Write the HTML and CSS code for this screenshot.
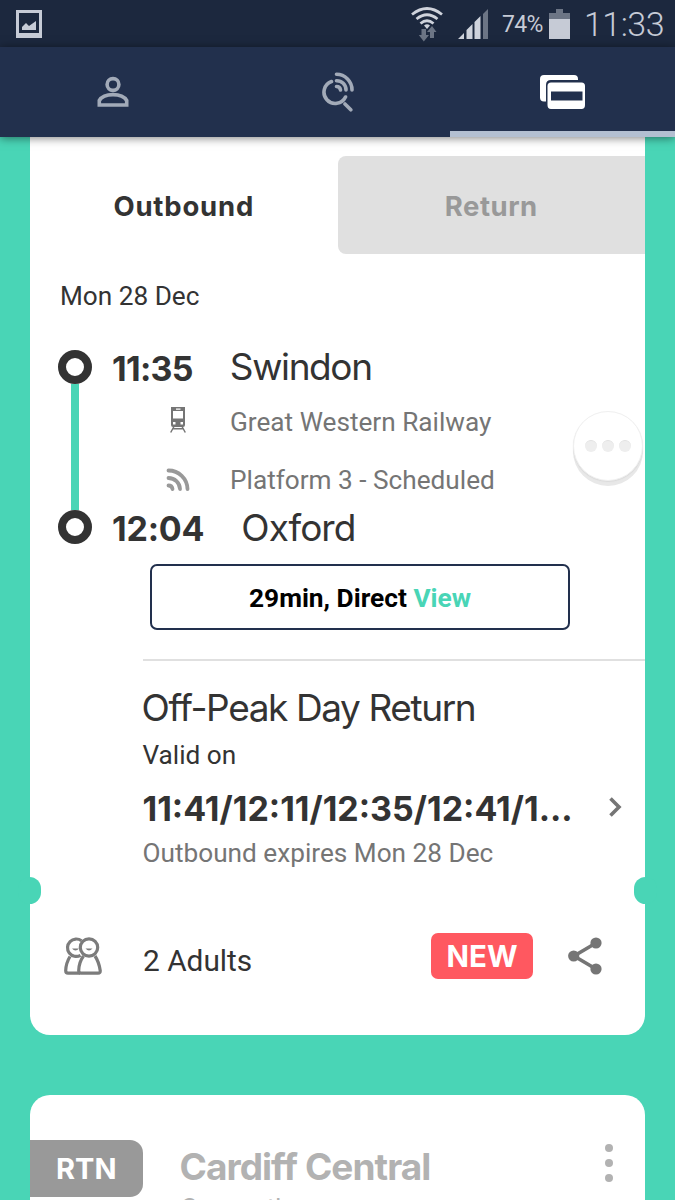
FILE: index.html
```html
<!DOCTYPE html>
<html lang="en">
  <head>
    <meta charset="UTF-8" />
    <meta name="viewport" content="width=device-width, initial-scale=1.0" />
    <title>My Tickets</title>
    <link rel="stylesheet" href="styles.css">
  </head>
  <body>
    <!-- phone status bar -->
    <div class="status-bar">
      <svg class="icon-picture" width="26" height="28" viewBox="0 0 26 28">
        <path fill="#c6cbd6" fill-rule="evenodd" d="M0 0h26v28H0zM3 3v20h20V3z" />
        <path fill="#c6cbd6" d="M6 20v-3l4-4 3 3 7-5v9z" />
      </svg>
      <div class="status-right">
        <svg class="icon-wifi" width="32" height="36" viewBox="0 0 32 36">
          <g fill="none" stroke="#cfd3dc" stroke-width="2.8">
            <path d="M1 8.500Q16-3.500 31 8.500" />
            <path d="M5.500 13Q16 4.500 26.500 13" />
            <path d="M9.500 17.500Q16 12 22.500 17.500" />
          </g>
          <path fill="#cfd3dc" d="M13 19.500q3-2.500 6 0L16 23z" />
          <path fill="#6c7585" d="M10.500 23h4.500v6h3l-5.200 6.500L7.800 29h2.700zM19 32v-6h-3l5-6 4.500 6H23v6z" />
        </svg>
        <svg class="icon-signal" width="30" height="30" viewBox="0 0 30 30">
          <path fill="#cfd3dc" d="M0 30l6-6v6zM8.500 30v-9l6-6v15zM16.500 30V13l6-6v23z" />
          <path fill="#6c7585" d="M25 30V5l5-5v30z" />
        </svg>
        <span class="battery-text">74%</span>
        <svg class="icon-battery" width="21" height="30" viewBox="0 0 21 30">
          <path fill="#6c7585" d="M0 4h7V0h7v4h7v7H0z" />
          <path fill="#c6cbd6" d="M0 10h21v20H0z" />
        </svg>
        <span class="clock">11:33</span>
      </div>
    </div>

    <!-- main tabs -->
    <nav class="nav">
      <a class="nav-item">
        <svg width="32" height="32" viewBox="0 0 32 32" fill="none" stroke="#a2aab8" stroke-width="3.600">
          <circle cx="16" cy="8.500" r="5.900" />
          <path d="M2.300 29V24.500C5 20 11 18.600 16 18.600S27 20 29.700 24.500V29z" />
        </svg>
      </a>
      <a class="nav-item">
        <svg width="34" height="40" viewBox="0 0 34 40" fill="none" stroke="#a2aab8" stroke-width="3.600" stroke-linecap="round">
          <path d="M10.500 9.500A11.300 11.300 0 1 0 24.500 25" />
          <path d="M24 32l5.800 5.800" />
          <path d="M15.500 2.300A15.500 15.500 0 0 1 31 18" />
          <path d="M15.500 8.700A9.200 9.200 0 0 1 25 18" />
          <path d="M15.500 14.500Q19 14.500 19.500 18" />
        </svg>
      </a>
      <a class="nav-item active">
        <svg width="46" height="36" viewBox="0 0 46 36">
          <path fill="#fff" d="M4 1h30q4 0 4 4v1H11q-5 0-5 5v16.500H4q-4 0-4-4V5q0-4 4-4z" />
          <path fill="#fff" fill-rule="evenodd" d="M11 8.500h30.500q3.500 0 3.500 3.500v19q0 4-3.500 4H11q-3.500 0-3.500-4V12q0-3.500 3.500-3.500zM11 17.500v9h31.500v-9z" />
        </svg>
      </a>
    </nav>

    <main class="tickets">
      <section class="card">
        <div class="tabs">
          <div class="tab">Outbound</div>
          <div class="tab inactive">Return</div>
        </div>

        <div class="date">Mon 28 Dec</div>

        <div class="journey">
          <div class="rail">
            <span class="stop"></span>
            <span class="line"></span>
            <span class="stop"></span>
          </div>
          <div class="legs">
            <div class="place"><span class="time">11:35</span><span class="station">Swindon</span></div>
            <div class="info operator">
              <span class="info-icon">
                <svg width="16" height="26" viewBox="0 0 16 26">
                  <path fill="#757575" fill-rule="evenodd" d="M1 0h14v18q0 2-2 2H3q-2 0-2-2zM3 4v7.500h10V4zM6 1.500v1.200h4.500V1.500zM3 15v2.500h2.500V15zM10.500 15v2.500H13V15z" />
                  <path stroke="#757575" stroke-width="1.500" fill="none" d="M4 19.500L.7 25.500M12 19.500l3.300 6M3 21.700h10" />
                </svg>
              </span>
              <span>Great Western Railway</span>
            </div>
            <div class="info platform">
              <span class="info-icon">
                <svg width="24" height="24" viewBox="0 0 24 24" fill="none" stroke="#999" stroke-width="3.800" stroke-linecap="round">
                  <path d="M2.500 2.500A19 19 0 0 1 21.500 21" />
                  <path d="M2.500 10A11.500 11.500 0 0 1 14 21" />
                  <path d="M2.500 17.500Q6 17.500 6.500 21" />
                </svg>
              </span>
              <span>Platform 3 - Scheduled</span>
            </div>
            <div class="place last"><span class="time">12:04</span><span class="station">Oxford</span></div>
          </div>
        </div>

        <div class="bubble"><i></i><i></i><i></i></div>

        <button class="view-btn">29min, Direct <span>View</span></button>

        <div class="fare">
          <h2 class="fare-title">Off-Peak Day Return</h2>
          <p class="fare-label">Valid on</p>
          <div class="fare-times">
            <span class="times">11:41/12:11/12:35/12:41/1...</span>
            <svg width="14" height="22" viewBox="0 0 14 22" fill="none" stroke="#757575" stroke-width="3.600">
              <path d="M2.500 2.500l8.500 8.500-8.500 8.500" />
            </svg>
          </div>
          <p class="fare-expiry">Outbound expires Mon 28 Dec</p>
        </div>

        <span class="notch left"></span>
        <span class="notch right"></span>

        <div class="card-footer">
          <svg class="icon-people" width="38" height="38" viewBox="0 0 38 38" fill="none" stroke="#7c7c7c" stroke-width="3.200">
            <path d="M6 19.500Q2 26 1.700 33.500Q1.700 36.200 4 36.200H16M16.500 18.300a8.700 8.700 0 1 1 1-14.500" />
            <circle cx="25" cy="10.500" r="8.700" />
            <path d="M19.500 19Q15 25 14.700 33.500Q14.700 36.200 17 36.200H34Q36.500 36.200 36.200 33.500Q35 25 31 19" />
            <path fill="#7c7c7c" stroke="none" d="M8 11.500h7q-3.500 4-7 0zM21.500 11.500h7q-3.500 4-7 0z" />
          </svg>
          <span class="passengers">2 Adults</span>
          <span class="badge">NEW</span>
          <svg class="icon-share" width="34" height="38" viewBox="0 0 34 38">
            <path stroke="#757575" stroke-width="3.600" fill="none" d="M28 6L6 19l22 13" />
            <g fill="#757575">
              <circle cx="28" cy="6" r="5.600" />
              <circle cx="5.700" cy="19" r="5.600" />
              <circle cx="28" cy="32" r="5.600" />
            </g>
          </svg>
        </div>
      </section>

      <section class="card next">
        <div class="next-row">
          <span class="rtn">RTN</span>
          <div class="next-text">
            <span class="next-title">Cardiff Central</span>
            <span class="next-sub">Carmarthen</span>
          </div>
          <div class="dots"><i></i><i></i><i></i></div>
        </div>
      </section>
    </main>
  </body>
</html>
```
FILE: styles.css
```css
* {
  box-sizing: border-box;
}

body {
  margin: 0;
  height: 1200px;
  overflow: hidden;
  display: flex;
  flex-direction: column;
  background: #49d5b6;
  color: #333;
  font-family: Roboto, sans-serif;
  font-size: 26.2px;
}

svg {
  display: block;
  flex: none;
}

h2,
p {
  margin: 0;
  font-weight: 400;
}

.status-bar {
  flex: none;
  height: 47px;
  padding: 0 11px 0 16px;
  display: flex;
  justify-content: space-between;
  align-items: center;
  background: #1c283e;
  color: #c6cbd6;
}

.status-right {
  display: flex;
  align-items: center;
}

.icon-wifi {
  margin-right: 15px;
}

.icon-signal {
  margin-right: 14px;
}

.battery-text {
  width: 42px;
  margin-right: 5px;
  padding-top: 2px;
  font-size: 23px;
  letter-spacing: -0.7px;
}

.icon-battery {
  margin-right: 14px;
}

.clock {
  width: 80px;
  font-size: 34px;
  font-weight: 350;
  letter-spacing: -0.5px;
}

.nav {
  flex: none;
  height: 90px;
  display: flex;
  background: #22304d;
  box-shadow: 0 1px 9px rgba(0, 0, 0, 0.5);
  position: relative;
  z-index: 2;
}

.nav-item {
  flex: 1;
  display: flex;
  align-items: center;
  justify-content: center;
  border-bottom: 6px solid transparent;
  padding-top: 6px;
}

.nav-item.active {
  border-color: #b3bfd1;
}

.tickets {
  padding: 0 30px;
}

.card {
  position: relative;
  height: 898px;
  background: #fff;
  border-radius: 0 0 20px 20px;
}

.tabs {
  display: flex;
  padding-top: 19px;
}

.tab {
  flex: 1;
  height: 98px;
  line-height: 101px;
  text-align: center;
  font-family: Inter, sans-serif;
  font-size: 27.5px;
  font-weight: 700;
  letter-spacing: 0.8px;
}

.tab.inactive {
  background: #e0e0e0;
  color: #999;
  border-radius: 8px 0 0 8px;
  letter-spacing: 0.5px;
}

.date {
  margin: 26px 0 0 30px;
  height: 70px;
  line-height: 32px;
}

.journey {
  display: flex;
  height: 204px;
  padding-left: 28px;
}

.rail {
  width: 34px;
  height: 194px;
  margin-right: 20px;
  display: flex;
  flex-direction: column;
  align-items: center;
}

.stop {
  width: 34px;
  height: 34px;
  border: 8px solid #333;
  border-radius: 50%;
}

.line {
  flex: 1;
  width: 8px;
  background: #49d5b6;
}

.place {
  display: flex;
  align-items: center;
  height: 34px;
  font-family: Inter, sans-serif;
}

.place.last {
  height: 54px;
}

.time {
  margin-right: 37px;
  padding-top: 2px;
  font-size: 34px;
  font-weight: 700;
  letter-spacing: -0.7px;
}

.last .time {
  letter-spacing: -0.2px;
}

.station {
  margin-bottom: 2px;
  font-size: 37px;
  letter-spacing: -1.4px;
}

.last .station {
  margin-bottom: 0;
  letter-spacing: -1px;
}

.info {
  display: flex;
  align-items: center;
  color: #757575;
}

.operator {
  height: 76px;
}

.operator svg {
  margin-bottom: 4px;
}

.platform {
  height: 40px;
}

.info-icon {
  width: 118px;
  padding-left: 14px;
  display: flex;
  justify-content: center;
}

/* floating assistant button */
.bubble {
  position: absolute;
  top: 274px;
  right: 2px;
  width: 70px;
  height: 70px;
  display: flex;
  align-items: center;
  justify-content: center;
  gap: 5px;
  background: #fff;
  border: 1px solid #f0f0f0;
  border-radius: 50%;
  box-shadow: 0 1px 1px #dadada, 0 5px 0 #e8e8e8;
}

.bubble i {
  width: 12px;
  height: 12px;
  border-radius: 50%;
  background: #eee;
  border-top: 1px solid #e0e0e0;
}

.view-btn {
  display: block;
  width: 420px;
  height: 66px;
  margin: 10px 0 0 120px;
  padding: 2px 0 0;
  background: #fff;
  border: 2px solid #22304d;
  border-radius: 7px;
  color: #000;
  font: 700 26.3px Roboto, sans-serif;
}

.view-btn span {
  color: #49d5b6;
}

.fare {
  margin: 29px 0 0 112.500px;
  padding-top: 20px;
  height: 258px;
  border-top: 2px solid #e0e0e0;
}

.fare-title {
  height: 54px;
  line-height: 54px;
  margin-left: -1px;
  font-family: Inter, sans-serif;
  font-size: 37px;
  letter-spacing: -1.4px;
}

.fare-label {
  height: 40px;
  line-height: 40px;
}

.fare-times {
  display: flex;
  align-items: center;
  justify-content: space-between;
  height: 62px;
  padding: 2px 23px 0 0;
  font-family: Inter, sans-serif;
  font-size: 34px;
  font-weight: 700;
}

.times {
  padding-top: 2px;
}

.fare-expiry {
  line-height: 33px;
  color: #757575;
}

.notch {
  position: absolute;
  top: 740px;
  width: 23px;
  height: 27px;
  border-radius: 12px;
  background: #49d5b6;
}

.notch.left {
  left: -12px;
}

.notch.right {
  right: -12px;
}

.card-footer {
  display: flex;
  align-items: center;
  height: 78px;
  padding: 0 43px 0 34px;
}

.passengers {
  margin-left: 41px;
  padding-top: 9px;
  font-size: 29.8px;
}

.badge {
  width: 102px;
  height: 46px;
  margin-left: auto;
  margin-right: 35px;
  border-radius: 7px;
  background: #ff5860;
  color: #fff;
  line-height: 47px;
  text-align: center;
  font-family: Inter, sans-serif;
  font-size: 29.5px;
  font-weight: 700;
}

.card.next {
  margin-top: 60px;
  height: 105px;
  padding-top: 45px;
  border-radius: 20px 20px 0 0;
  overflow: hidden;
}

.next-row {
  display: flex;
  color: #b2b2b2;
  font-family: Inter, sans-serif;
}

.rtn {
  width: 112.500px;
  height: 57px;
  line-height: 58px;
  border-radius: 0 13px 13px 0;
  background: #999;
  color: #fff;
  text-align: center;
  font-size: 29px;
  font-weight: 700;
}

.next-text {
  margin-left: 37px;
  display: flex;
  flex-direction: column;
}

.next-title {
  line-height: 54px;
  font-size: 37px;
  font-weight: 700;
  letter-spacing: -0.95px;
}

.next-sub {
  margin-left: 1px;
  font-family: Roboto, sans-serif;
  font-size: 26px;
  line-height: 28px;
}

.dots {
  margin: 4px 32px 0 auto;
  display: flex;
  flex-direction: column;
  gap: 7px;
}

.dots i {
  width: 8px;
  height: 8px;
  border-radius: 50%;
  background: #b2b2b2;
}
```
